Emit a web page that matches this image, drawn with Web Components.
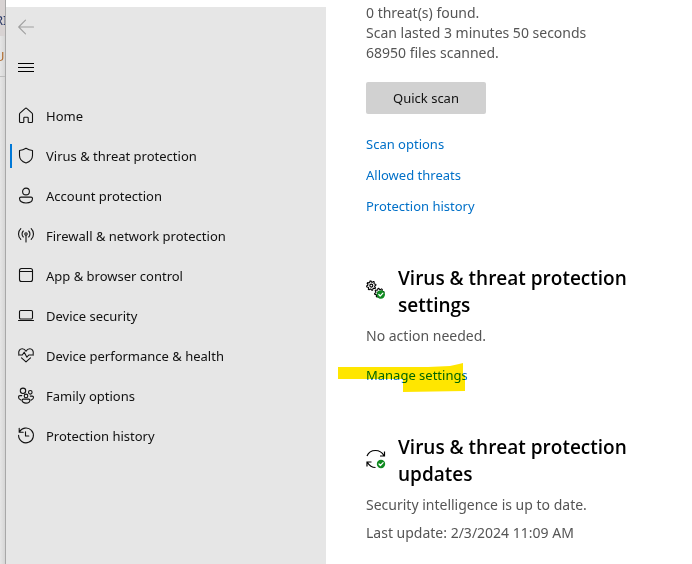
<!DOCTYPE html>
<html lang="en">
<head>
<meta charset="utf-8">
<title>Virus &amp; threat protection</title>
<style>
body { margin: 0; background: #fff; font-family: "Noto Sans", "Open Sans", sans-serif; color: #000; }
</style>
</head>
<body>
<security-app></security-app>
<script>
const svg = (body, size = 16) =>
  `<svg width="${size}" height="${size}" viewBox="0 0 ${size} ${size}" fill="none" stroke="currentColor" stroke-width="1.1" stroke-linecap="round" stroke-linejoin="round" overflow="visible" aria-hidden="true">${body}</svg>`;

const gear = (cx, cy) => {
  let d = "";
  for (let i = 0; i < 32; i++) {
    const a = (i - 1.5) * Math.PI / 16;
    const r = i % 4 < 2 ? 4.7 : 3.5;
    d += (i ? "L" : "M") + (cx + r * Math.cos(a)).toFixed(2) + " " + (cy + r * Math.sin(a)).toFixed(2);
  }
  return `<path d="${d}Z" stroke-width="1.1"/><circle cx="${cx}" cy="${cy}" r="1.5"/>`;
};
const tick = (cx, cy) =>
  `<circle cx="${cx}" cy="${cy}" r="4.2" fill="#0f8a20" stroke="none"/><path d="M${cx - 2} ${cy}l1.4 1.5 2.7-2.9" stroke="#fff" stroke-width="1.2"/>`;

const icons = {
  back: svg('<path d="M15.5 8H.8M7.5 1.2.7 8l6.8 6.8"/>'),
  menu: svg('<path d="M0 4.500h16M0 8.500h16M0 12.500h16" stroke-linecap="butt" stroke-width="1"/>'),
  home: svg('<path d="M1.500 13.500V6.300c0-.4.2-.8.500-1.100L7.300.4c.4-.4 1-.4 1.400 0L14 5.200c.3.3.5.7.5 1.100V13.500c0 .6-.4 1-1 1H11c-.5 0-.8-.3-.8-.8v-3.700c0-.5-.3-.8-.8-.8H6.600c-.5 0-.8.3-.8.8v3.700c0 .5-.3.800-.8.800H2.500c-.6 0-1-.4-1-1Z"/>'),
  shield: svg('<path d="M8 .3C6 1.600 4 2.300 1.500 2.500v5c0 3.500 2.300 6.100 6.500 7.500 4.200-1.400 6.500-4 6.500-7.500v-5C12 2.300 10 1.600 8 .3Z"/>'),
  account: svg('<circle cx="8" cy="3.500" r="3.400"/><path d="M3 9.100h10c.9 0 1.500.6 1.500 1.500 0 2.700-2.600 4.400-6.500 4.400s-6.500-1.700-6.500-4.400c0-.9.600-1.500 1.500-1.500Z"/>'),
  network: svg('<circle cx="8" cy="6" r="1.200"/><path d="M8 7.500v6.500M5.300 9a4.200 4.200 0 0 1 0-6M10.700 9a4.200 4.200 0 0 0 0-6M2.800 11.300a7.300 7.300 0 0 1 0-10.600M13.200 11.300a7.300 7.300 0 0 0 0-10.600"/>'),
  app: svg('<rect x="1.500" y="0.500" width="13" height="13" rx="2"/><path d="M1.500 3.500h13"/>'),
  device: svg('<rect x="1.500" y="2.500" width="13" height="8.500" rx="1.200"/><path d="M.5 12.500h15"/>'),
  health: svg('<path d="M.8 6C.2 2.700 2 .8 4.200 .8c1.700 0 2.900.8 3.800 2.400.9-1.600 2.100-2.400 3.800-2.400 2.200 0 4 1.900 3.400 5.200M.5 7h3.800l1.900-2.800 2.700 5 1.900-2.200h4.700M3.500 9.800 8 13.900l4.500-4.100"/>'),
  family: svg('<circle cx="5" cy="2.800" r="2.700"/><circle cx="12.300" cy="4.300" r="1.800"/><circle cx="8" cy="7.900" r="1.800"/><path d="M3.800 7.600H2C1 7.600 .5 8.100.5 9c0 1.500.9 2.600 2.400 3.100M12.300 8.100h1.900c.8 0 1.300.5 1.300 1.200 0 1.400-.9 2.400-2.400 2.800M5.300 11.100h5.500c.7 0 1.100.4 1.100 1.100 0 1.700-1.600 2.900-3.900 2.900s-3.900-1.200-3.900-2.900c0-.7.500-1.100 1.200-1.100Z"/>'),
  history: svg('<path d="M1.200 .3v4h4M1.300 4.300A7.400 7.400 0 1 1 .6 7.300M7.500 3.800v4.200h3.300"/>'),
  gears: svg(gear(5.300, 3.600) + gear(13.300, 11) + tick(14.800, 12.500), 20),
  sync: svg('<path d="M1 5C2.500 1.300 6-.5 9.500-.5c3.600 0 6.700 1.900 8.500 5.200M18.500 .5V5H14M1 15.500V11h4.500M1.500 11.500c2 3.500 4.500 5 8 5" stroke-linecap="butt" stroke-linejoin="miter" stroke-width="1.200"/>' + tick(15, 13), 20),
};

const define = (name, html) => {
  const t = document.createElement("template");
  t.innerHTML = html;
  customElements.define(name, class extends HTMLElement {
    constructor() {
      super();
      this.attachShadow({ mode: "open" }).append(t.content.cloneNode(true));
    }
  });
};

customElements.define("ui-icon", class extends HTMLElement {
  connectedCallback() {
    if (this.shadowRoot) return;
    this.attachShadow({ mode: "open" }).innerHTML =
      `<style>:host{display:inline-flex;flex:none}svg{display:block}</style>${icons[this.getAttribute("name")]}`;
  }
});

customElements.define("nav-item", class extends HTMLElement {
  connectedCallback() {
    if (this.shadowRoot) return;
    const on = this.hasAttribute("current");
    this.attachShadow({ mode: "open" }).innerHTML = `
      <style>
        :host { display: block; }
        a { display: grid; grid-template-columns: 2px 16px 1fr; align-items: center; height: 40px; padding-left: 4px; color: #111; text-decoration: none; font-size: 13px; line-height: 20px; }
        a { column-gap: 12px; grid-template-columns: 16px 1fr; padding-left: 8px; border-left: 4px solid transparent; }
        a[aria-current] { background: linear-gradient(#0078d7, #0078d7) -8px center / 2px 24px no-repeat; background-origin: content-box; }
      </style>
      <a href="#" ${on ? 'aria-current="page"' : ""}><ui-icon name="${this.getAttribute("icon")}"></ui-icon><span><slot></slot></span></a>`;
  }
});

define("side-nav", `
  <style>
    :host { display: block; background: #e6e6e6; }
    button { display: flex; align-items: center; width: 40px; height: 40px; padding: 0 0 0 12px; border: 0; background: none; color: #000; }
    button:disabled { color: #a0a0a0; }
    nav { padding-top: 9px; }
  </style>
  <button disabled aria-label="Back"><ui-icon name="back"></ui-icon></button>
  <button aria-label="Open navigation"><ui-icon name="menu"></ui-icon></button>
  <nav aria-label="Windows Security">
    <nav-item icon="home">Home</nav-item>
    <nav-item icon="shield" current>Virus &amp; threat protection</nav-item>
    <nav-item icon="account">Account protection</nav-item>
    <nav-item icon="network">Firewall &amp; network protection</nav-item>
    <nav-item icon="app">App &amp; browser control</nav-item>
    <nav-item icon="device">Device security</nav-item>
    <nav-item icon="health">Device performance &amp; health</nav-item>
    <nav-item icon="family">Family options</nav-item>
    <nav-item icon="history">Protection history</nav-item>
  </nav>`);

define("window-behind", `
  <style>
    :host { display: flex; flex-direction: column; overflow: hidden; background: linear-gradient(90deg, #e6e6e6, #d6d6d6); border-right: 1px solid #a8a8a8; font-size: 13px; line-height: 20px; }
    div { display: flex; align-items: center; white-space: nowrap; box-sizing: border-box; }
    span { margin-left: -5px; }
    .tab { height: 36px; padding-top: 3px; background: #d8d3d3; color: #2b3a68; }
    .row { height: 41px; border-bottom: 1px solid #bdbdbd; color: #b06a2c; }
  </style>
  <div class="tab"><span>RI</span></div>
  <div class="row"><span>US</span></div>`);

define("text-link", `
  <style>
    :host { display: block; font-size: 13px; line-height: 20px; }
    a { color: #0070c8; text-decoration: none; }
  </style>
  <a href="#"><slot></slot></a>`);

define("marked-text", `
  <style>
    :host { display: block; position: relative; width: fit-content; }
    svg { position: absolute; left: -28px; top: -3px; mix-blend-mode: multiply; pointer-events: none; }
  </style>
  <slot></slot>
  <svg width="128" height="31" viewBox="0 0 128 31" aria-hidden="true"><path d="M0 5 25 5 90 5 112 4 121 2 125 1V13h2v16L65 30V17H0Z" fill="#ffe600"/></svg>`);

customElements.define("status-section", class extends HTMLElement {
  connectedCallback() {
    if (this.shadowRoot) return;
    this.attachShadow({ mode: "open" }).innerHTML = `
      <style>
        :host { display: block; font-size: 14px; line-height: 20px; color: #555; }
        header { display: flex; align-items: center; gap: 12px; margin-bottom: 7px; color: #000; }
        h2 { margin: 0; font: 600 19px/27px "Open Sans", "Noto Sans", sans-serif; }
      </style>
      <header><ui-icon name="${this.getAttribute("icon")}"></ui-icon><h2><slot name="title"></slot></h2></header>
      <slot></slot>`;
  }
});

define("main-panel", `
  <style>
    :host { display: block; padding: 3px 48px 21px 40px; font-size: 14px; line-height: 20px; color: #555; }
    p { margin: 0; }
    button { display: block; width: 120px; height: 32px; margin: 19px 0 20px; padding: 0; border: 0; border-radius: 2px; background: #d1d1d1; color: #111; font: inherit; font-size: 13px; }
    .links { display: grid; gap: 11px; margin-bottom: 49px; }
    .manage { margin: 19px 0 49px; }
    .gap { margin-top: 8px; }
  </style>
  <p>0 threat(s) found.</p>
  <p>Scan lasted 3 minutes 50 seconds</p>
  <p>68950 files scanned.</p>
  <button>Quick scan</button>
  <div class="links">
    <text-link>Scan options</text-link>
    <text-link>Allowed threats</text-link>
    <text-link>Protection history</text-link>
  </div>
  <status-section icon="gears">
    <span slot="title">Virus &amp; threat protection settings</span>
    <p>No action needed.</p>
    <marked-text class="manage"><text-link>Manage settings</text-link></marked-text>
  </status-section>
  <status-section icon="sync">
    <span slot="title">Virus &amp; threat protection updates</span>
    <p>Security intelligence is up to date.</p>
    <p class="gap">Last update: 2/3/2024 11:09 AM</p>
  </status-section>`);

define("security-app", `
  <style>
    :host { display: grid; grid-template-columns: 6px minmax(200px, 320px) minmax(0, 1fr); min-height: 100vh; }
    side-nav { margin-top: 7px; }
  </style>
  <window-behind></window-behind>
  <side-nav></side-nav>
  <main-panel></main-panel>`);
</script>
</body>
</html>
